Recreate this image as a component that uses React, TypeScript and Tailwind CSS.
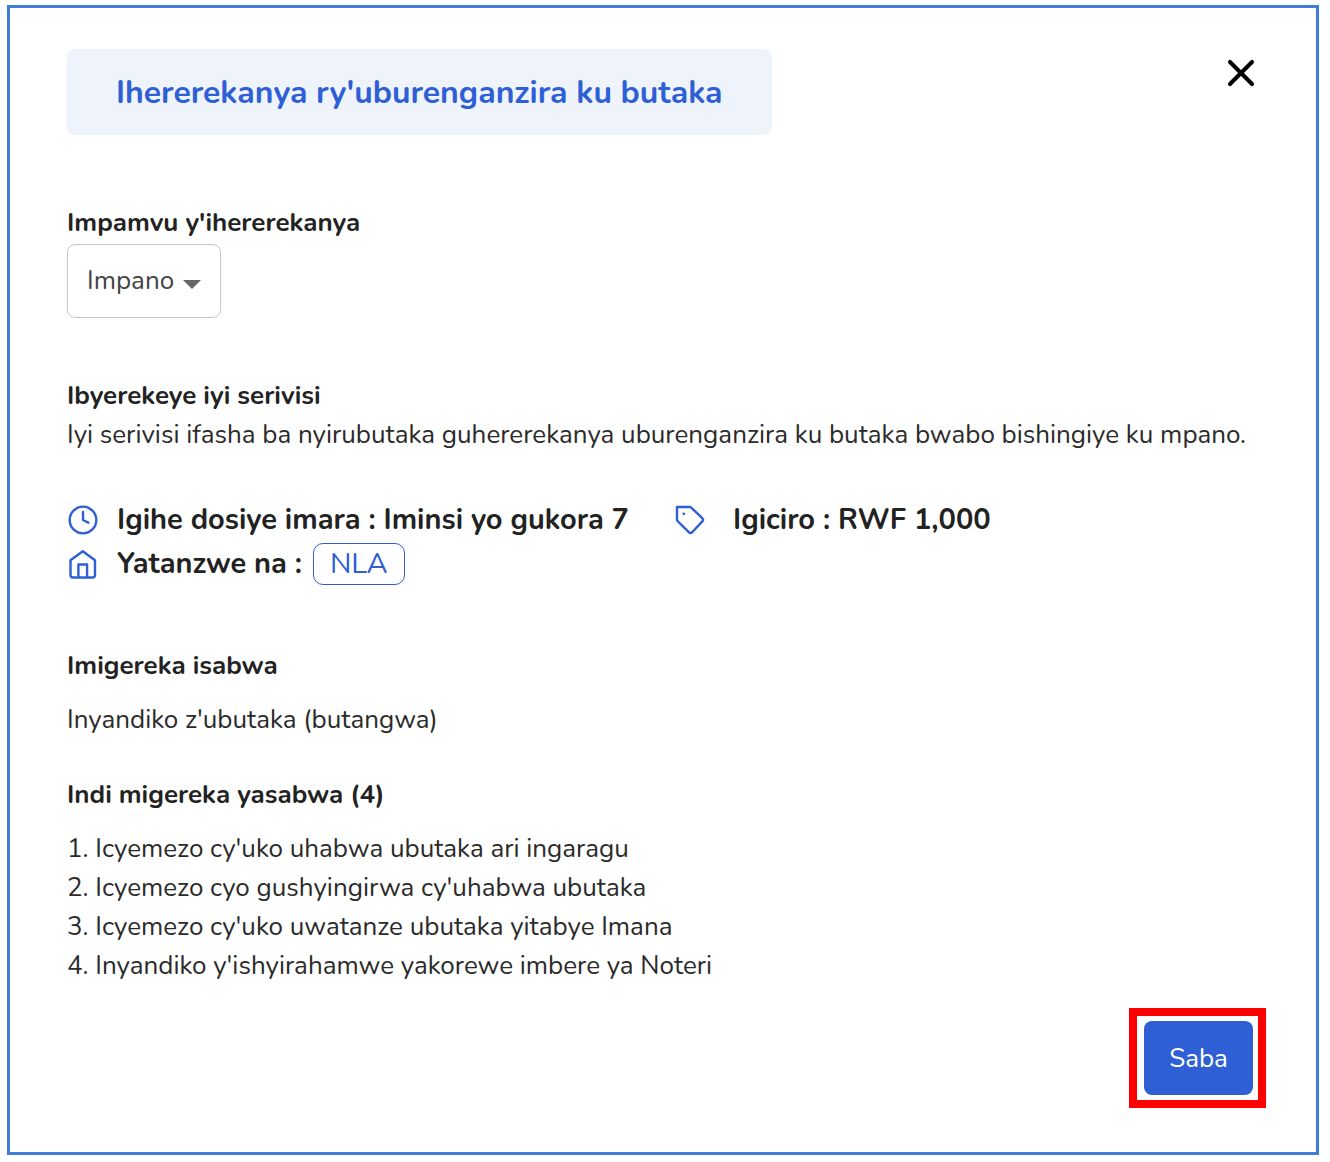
import React, { useState } from 'react';
import { Clock, X } from 'lucide-react';

const attachments = [
  "Icyemezo cy'uko uhabwa ubutaka ari ingaragu",
  "Icyemezo cyo gushyingirwa cy'uhabwa ubutaka",
  "Icyemezo cy'uko uwatanze ubutaka yitabye Imana",
  "Inyandiko y'ishyirahamwe yakorewe imbere ya Noteri",
];

const TagIcon = () => (
  <svg width="30" height="30" viewBox="0 0 30 30" fill="none" stroke="currentColor" strokeWidth="2.4" strokeLinejoin="round" className="shrink-0">
    <path d="M2 2H15.5L27.3 13.2Q28.8 14.8 27.3 16.4L17.2 27.2Q15.5 28.6 13.8 27.2L2 15.5Z" />
    <circle cx="8.8" cy="8.8" r="1.4" fill="currentColor" stroke="none" />
  </svg>
);

const HomeIcon = () => (
  <svg width="30" height="30" viewBox="0 0 30 30" fill="none" stroke="currentColor" strokeWidth="2.4" strokeLinejoin="round" className="shrink-0">
    <path d="M3.5 11.3L15.8 2.2L28 11.3V26Q28 28.5 25.5 28.5H6Q3.5 28.5 3.5 26Z" />
    <path d="M11.4 28.5V15.5H20.1V28.5" />
  </svg>
);

const App: React.FC = () => {
  const [reason, setReason] = useState('impano');

  return (
    <div className="pt-[5px] pl-[7px] pr-[11px] pb-[7px] bg-white font-['Nunito','Open_Sans',sans-serif] text-[26px] leading-[39px] text-[#2b2b2b]">
      <div className="border-[3px] border-[#3f7bd9] pt-[41px] pl-[57px] pr-[50px] pb-[44px]">
        <header className="flex items-start justify-between">
          <h1 className="rounded-lg bg-[#eef3fc] px-[49px] pt-[22px] pb-5 text-[32px] leading-[44px] font-bold text-[#2e5fd5]">
            Ihererekanya ry'uburenganzira ku butaka
          </h1>
          <button type="button" aria-label="Funga" className="mt-[2px] mr-[3px] text-black">
            <X size={44} strokeWidth={2.2} />
          </button>
        </header>

        <section className="mt-[68px]">
          <label htmlFor="reason" className="block font-bold text-[#222222]">
            Impamvu y'ihererekanya
          </label>
          <div className="relative mt-[2px] inline-block align-top">
            <select
              id="reason"
              value={reason}
              onChange={(e) => setReason(e.target.value)}
              className="block h-[74px] w-[154px] appearance-none rounded-lg border border-[#c8c8c8] bg-white pb-[2px] pl-[19px] pr-10 text-[#444444]"
            >
              <option value="impano">Impano</option>
            </select>
            <svg width="18" height="9" viewBox="0 0 18 9" className="pointer-events-none absolute right-5 top-9 text-[#666666]">
              <path d="M0 0H18L9 9Z" fill="currentColor" />
            </svg>
          </div>
        </section>

        <section className="mt-[58px]">
          <h2 className="font-bold text-[#222222]">Ibyerekeye iyi serivisi</h2>
          <p>Iyi serivisi ifasha ba nyirubutaka guhererekanya uburenganzira ku butaka bwabo bishingiye ku mpano.</p>
        </section>

        <section className="mt-11 text-[29px] leading-[44px] font-bold text-[#222222]">
          <div className="flex flex-wrap gap-x-[46px]">
            <div className="flex items-center gap-5">
              <Clock size={32} strokeWidth={1.8} className="-mr-[2px] shrink-0 text-[#2e5fd5]" />
              <span>Igihe dosiye imara : Iminsi yo gukora 7</span>
            </div>
            <div className="flex items-center gap-7">
              <span className="text-[#2e5fd5]"><TagIcon /></span>
              <span>Igiciro : RWF 1,000</span>
            </div>
          </div>
          <div className="flex items-center gap-5">
            <span className="text-[#2e5fd5]"><HomeIcon /></span>
            <div className="flex items-center gap-[11px]">
              <span>Yatanzwe na :</span>
              <span className="rounded-[10px] border border-[#2e5fd5] px-4 leading-[40px] font-normal text-[#2e5fd5]">NLA</span>
            </div>
          </div>
        </section>

        <section className="mt-[60px]">
          <h2 className="font-bold text-[#222222]">Imigereka isabwa</h2>
          <p className="mt-[15px]">Inyandiko z'ubutaka (butangwa)</p>
        </section>

        <section className="mt-9">
          <h2 className="font-bold text-[#222222]">Indi migereka yasabwa (4)</h2>
          <ol className="mt-[15px]">
            {attachments.map((item, i) => (
              <li key={item}>{i + 1}. {item}</li>
            ))}
          </ol>
        </section>

        <footer className="mt-[23px] flex justify-end">
          <div className="border-[8px] border-[#ff0000] p-[5px] pl-[7px]">
            <button type="button" className="block h-[74px] w-[109px] rounded-lg bg-[#2e5fd5] text-white">
              Saba
            </button>
          </div>
        </footer>
      </div>
    </div>
  );
};

export default App;
